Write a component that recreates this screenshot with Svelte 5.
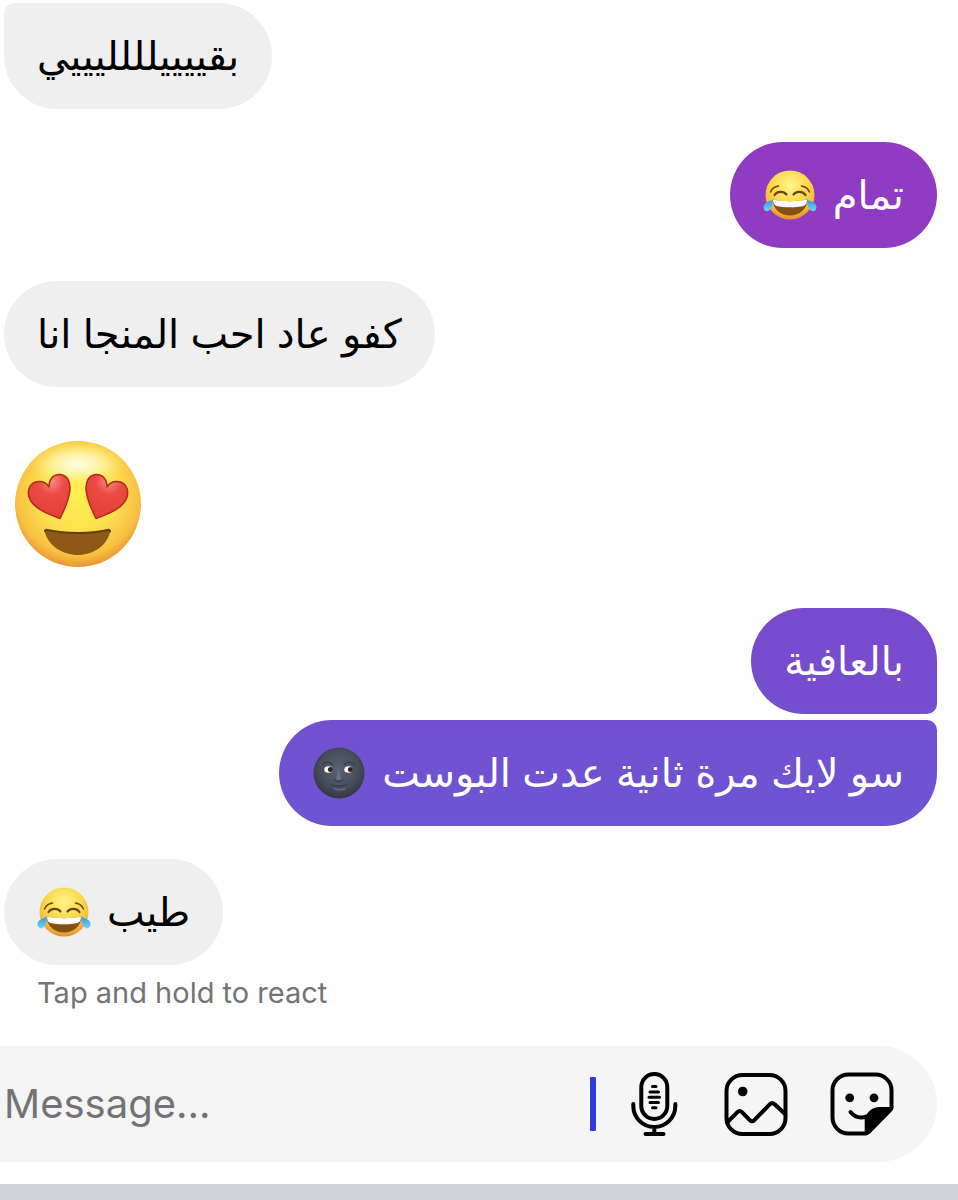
<script lang="ts">
	type Message = {
		text?: string;
		emoji?: 'joy' | 'moon' | 'love';
		mine?: boolean;
		first?: boolean;
		last?: boolean;
	};

	const messages: Message[] = [
		{ text: 'بقييييلللليييي', last: true },
		{ text: 'تمام', emoji: 'joy', mine: true },
		{ text: 'كفو عاد احب المنجا انا' },
		{ emoji: 'love' },
		{ text: 'بالعافية', mine: true, first: true },
		{ text: 'سو لايك مرة ثانية عدت البوست', emoji: 'moon', mine: true, last: true },
		{ text: 'طيب', emoji: 'joy' }
	];

	let draft = $state('');
</script>

{#snippet joy()}
	<svg class="emoji" viewBox="0 0 54 54" role="img" aria-label="😂">
		<defs>
			<radialGradient id="joy-face" cx="50%" cy="30%" r="70%">
				<stop offset="0" stop-color="#fff48c" />
				<stop offset="0.55" stop-color="#fcd648" />
				<stop offset="0.85" stop-color="#f3b23c" />
				<stop offset="1" stop-color="#e58c2b" />
			</radialGradient>
			<linearGradient id="joy-tear" x1="0" y1="0" x2="0" y2="1">
				<stop offset="0" stop-color="#3c98dc" />
				<stop offset="1" stop-color="#6fd3fa" />
			</linearGradient>
		</defs>
		<circle cx="27" cy="27" r="24.500" fill="url(#joy-face)" />
		<g fill="none" stroke="#6f4310" stroke-linecap="round">
			<path d="M7.500 24c1.500-3.500 4.500-5.500 8-6M46.500 24c-1.500-3.500-4.500-5.500-8-6" stroke-width="1.500" />
			<path d="M11.500 27c2.500-4 9-4.300 12-.5M42.500 27c-2.500-4-9-4.300-12-.5" stroke-width="2.200" />
		</g>
		<path d="M9.500 31.500c10 2 25 2 35 0C44 41 37 47.500 27 47.500S10 41 9.500 31.500z" fill="#86500f" />
		<path d="M10 31.800c10 1.800 24 1.800 34 0 0 3-1 5.500-3.300 6.200-8 1.800-19.400 1.800-27.400 0C11 37.300 10 34.800 10 31.800z" fill="#fff" />
		<path d="M10 32C4.500 33 .3 36 .5 39.500c.2 3.500 3.700 4.800 6.300 2.500 2.200-2 2.800-5 3.200-10z" fill="url(#joy-tear)" />
		<path d="M44 32c5.500 1 9.700 4 9.500 7.500-.2 3.500-3.700 4.800-6.300 2.500-2.200-2-2.800-5-3.200-10z" fill="url(#joy-tear)" />
	</svg>
{/snippet}

{#snippet moon()}
	<svg class="emoji" viewBox="0 0 54 54" role="img" aria-label="🌚">
		<defs>
			<radialGradient id="moon-face" cx="50%" cy="42%" r="58%">
				<stop offset="0" stop-color="#596272" />
				<stop offset="0.65" stop-color="#474d5b" />
				<stop offset="1" stop-color="#343642" />
			</radialGradient>
		</defs>
		<circle cx="27" cy="27" r="25.500" fill="url(#moon-face)" />
		<path d="M10 19c3-4 8-4 11 0M32 19c3-4 8-4 11 0" fill="none" stroke="#3c414d" stroke-width="1.500" />
		<ellipse cx="16.500" cy="23.500" rx="4.200" ry="3.200" fill="#fff" />
		<ellipse cx="36.500" cy="23.500" rx="4.200" ry="3.200" fill="#fff" />
		<circle cx="18.400" cy="23.500" r="2.500" fill="#2b2620" />
		<circle cx="38.400" cy="23.500" r="2.500" fill="#2b2620" />
		<path d="M26.500 22l-2.500 11c1 2 4 2 5.500 0z" fill="#697180" />
		<path d="M23 33.500c1.500 2.500 6 2.500 8 0" fill="none" stroke="#30343f" stroke-width="1.200" />
		<path d="M16.500 37c5 3.500 16 3.500 21 0-5 5-16 5-21 0z" fill="#2f333e" />
		<path d="M22 42.500c3 1.500 8 1.500 11 0" fill="none" stroke="#646c7a" stroke-width="1.500" />
	</svg>
{/snippet}

{#snippet love()}
	<svg class="big-emoji" viewBox="0 0 128 128" role="img" aria-label="😍">
		<defs>
			<radialGradient id="love-face" cx="50%" cy="42%" r="60%">
				<stop offset="0" stop-color="#fff04f" />
				<stop offset="0.5" stop-color="#fce150" />
				<stop offset="0.82" stop-color="#f8c043" />
				<stop offset="1" stop-color="#e58c2d" />
			</radialGradient>
			<radialGradient id="love-shine">
				<stop offset="0" stop-color="#fffde8" />
				<stop offset="0.5" stop-color="#fffac0" stop-opacity="0.7" />
				<stop offset="1" stop-color="#fff27a" stop-opacity="0" />
			</radialGradient>
			<radialGradient id="love-heart" cx="55%" cy="15%" r="80%">
				<stop offset="0" stop-color="#f58d84" />
				<stop offset="0.4" stop-color="#ec4a43" />
				<stop offset="1" stop-color="#e5403a" />
			</radialGradient>
		</defs>
		<circle cx="64" cy="64" r="63" fill="url(#love-face)" />
		<ellipse cx="64" cy="24" rx="48" ry="22" fill="url(#love-shine)" />
		<g fill="url(#love-heart)" stroke="#b02a1c" stroke-width="1.500" stroke-linejoin="round">
			<path d="M46 78.500C35 74.500 20 69 15.500 58.500 12 49 17 42 24.500 41.500c5-.3 8.500 2 10.500 5.500C35 39.500 39 34.500 45.500 34.500c7 0 11 6.500 10.500 14.500C55.500 60 50.500 69 46 78.500z" />
			<path d="M82 78.500c11-4 26-9.500 30.500-20C116 49 111 42 103.500 41.500c-5-.3-8.500 2-10.500 5.500C93 39.500 89 34.500 82.500 34.500c-7 0-11 6.500-10.500 14.500C72.500 60 77.500 69 82 78.500z" />
		</g>
		<path d="M30.500 91c0-1.500 1-2 2.500-1.500 18 4 44 4 61 0 1.500-.5 2.500 0 2.500 1.500C93 106 79 115 64 115S34 106 30.500 91z" fill="#8c5a16" />
		<path d="M31 92c0-2 1-2.500 2.500-2 18 4 43 4 60 0 1.500-.5 2.500 0 2.500 2" fill="none" stroke="#693c0c" stroke-width="2" />
	</svg>
{/snippet}

<div class="chat">
	<main class="thread">
		{#each messages as message}
			{#if message.text}
				<div
					class="bubble"
					class:mine={message.mine}
					class:first={message.first}
					class:last={message.last}
					dir="rtl"
					lang="ar"
				>
					<span>{message.text}</span>
					{#if message.emoji === 'joy'}
						{@render joy()}
					{:else if message.emoji === 'moon'}
						{@render moon()}
					{/if}
				</div>
			{:else}
				{@render love()}
			{/if}
		{/each}
		<p class="hint">Tap and hold to react</p>
	</main>

	<form class="composer" onsubmit={(e) => e.preventDefault()}>
		<input type="text" bind:value={draft} placeholder="Message..." aria-label="Message" />
		<span class="caret"></span>
		<button type="button" aria-label="Voice message">
			<svg class="mic" viewBox="0 0 56 64">
				<rect x="15.300" y="2" width="26" height="45" rx="13" />
				<path d="M7.300 32v2a21 21 0 0 0 42 0v-2M28.300 55v7M19.500 62h18" />
				<path class="thin" d="M26.500 14.500h3.500M24 20h8.500M23 25.300h10.500M24 30.600h8.500M26.500 35.800h3.500" />
			</svg>
		</button>
		<button type="button" aria-label="Photo">
			<svg viewBox="0 0 64 64">
				<rect x="2.500" y="3" width="59" height="59" rx="16" />
				<circle class="solid" cx="18.700" cy="19.500" r="4.800" />
				<path d="M3 50.500l10.200-10.200q2.500-2.500 5 0l7.600 7.800q2.300 2.300 4.600 0l15.300-15.800q2.500-2.500 5 0L61 42" />
			</svg>
		</button>
		<button type="button" aria-label="Sticker">
			<svg viewBox="0 0 64 64">
				<path d="M61.500 36V18.500a16 16 0 0 0-16-16h-27a16 16 0 0 0-16 16v27a16 16 0 0 0 16 16H36" />
				<path class="solid" d="M34.700 63V47c2-7 7-12 15-12h13.600c0 2-.3 3-1.500 4.200L40.500 61c-1.500 1.500-3 2-5.800 2z" />
				<path d="M20.500 40c4 5 10 6.500 16 4.500" />
				<circle class="solid" cx="19.700" cy="25.800" r="4.400" />
				<circle class="solid" cx="44" cy="25.800" r="4.400" />
			</svg>
		</button>
	</form>

	<div class="keyboard-edge"></div>
</div>

<style>
	:global(body) {
		margin: 0;
		background: #fff;
		font-family: Inter, 'DejaVu Sans', sans-serif;
	}

	.chat {
		min-height: 100vh;
		display: flex;
		flex-direction: column;
	}

	.thread {
		display: flex;
		flex-direction: column;
		align-items: flex-start;
		padding: 3px 21px 0 4px;
	}

	.bubble {
		display: flex;
		align-items: center;
		gap: 16px;
		box-sizing: border-box;
		min-height: 106px;
		margin-bottom: 33px;
		padding: 24px 33px;
		border-radius: 53px;
		background: #efefef;
		color: #000;
		font-size: 40px;
		line-height: 58px;
	}

	.bubble.last {
		border-top-left-radius: 10px;
	}

	.bubble.mine {
		align-self: flex-end;
		background: linear-gradient(#903cc2 0, #8f3bc2 250px, #774cce 660px, #6c55d3 830px) fixed;
		color: #fff;
	}

	.bubble.mine.first {
		margin-bottom: 6px;
		border-bottom-right-radius: 10px;
	}

	.bubble.mine.last {
		border-top-left-radius: 53px;
		border-top-right-radius: 10px;
	}

	.emoji {
		flex: none;
		width: 54px;
		height: 54px;
	}

	.big-emoji {
		width: 128px;
		height: 128px;
		margin: 20px 0 40px 10px;
	}

	.hint {
		margin: -23px 0 0 33px;
		color: #737373;
		font-size: 29px;
		line-height: 36px;
	}

	.composer {
		display: flex;
		align-items: center;
		gap: 42px;
		box-sizing: border-box;
		height: 116px;
		margin: 35px 21px 0 0;
		padding-right: 43px;
		border-radius: 0 58px 58px 0;
		background: #f5f5f6;
	}

	input {
		flex: 1;
		min-width: 0;
		padding: 0 0 0 4px;
		border: none;
		outline: none;
		background: none;
		color: #000;
		font-family: inherit;
		font-size: 40px;
		line-height: 52px;
	}

	input::placeholder {
		color: #737373;
		opacity: 1;
	}

	.caret {
		width: 6px;
		height: 54px;
		margin-right: -12px;
		border-radius: 1px;
		background: #303bdc;
	}

	button {
		display: flex;
		padding: 0;
		border: none;
		background: none;
		cursor: pointer;
	}

	button svg {
		width: 64px;
		height: 64px;
		fill: none;
		stroke: #000;
		stroke-width: 4;
		stroke-linecap: round;
		stroke-linejoin: round;
	}

	button .mic {
		width: 56px;
	}

	button .thin {
		stroke-width: 3;
	}

	button .solid {
		fill: #000;
		stroke: none;
	}

	.keyboard-edge {
		flex: 1;
		min-height: 16px;
		margin-top: 22px;
		background: #d1d3d9;
	}
</style>
